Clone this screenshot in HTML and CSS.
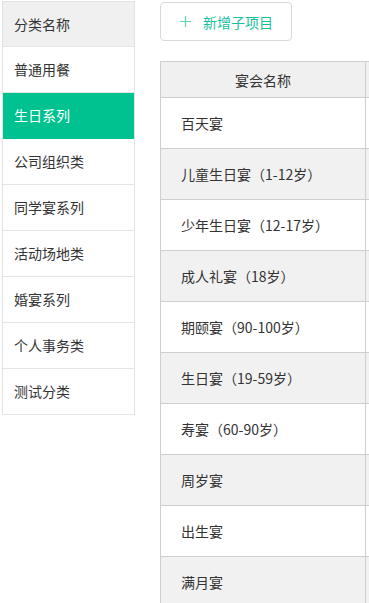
FILE: index.html
```html
<!DOCTYPE html>
<html lang="zh">
<head>
<meta charset="utf-8">
<link rel="stylesheet" href="styles.css">
</head>
<body>
<div class="page">
  <ul class="side">
    <li class="side-head">分类名称</li>
    <li class="side-item">普通用餐</li>
    <li class="side-item active">生日系列</li>
    <li class="side-item">公司组织类</li>
    <li class="side-item">同学宴系列</li>
    <li class="side-item">活动场地类</li>
    <li class="side-item">婚宴系列</li>
    <li class="side-item">个人事务类</li>
    <li class="side-item">测试分类</li>
  </ul>
  <div class="main">
    <button class="add-btn" type="button">
      <svg class="plus" width="11" height="11" viewBox="0 0 11 11"><path d="M5.5 0V11M0 5.5H11" stroke="#5fd3b5" stroke-width="1.2" fill="none"/></svg>
      <span>新增子项目</span>
    </button>
    <table class="grid">
      <thead>
        <tr><th class="c-name">宴会名称</th><th class="c-more"></th></tr>
      </thead>
      <tbody>
        <tr><td>百天宴</td><td></td></tr>
        <tr class="alt"><td>儿童生日宴（1-12岁）</td><td></td></tr>
        <tr><td>少年生日宴（12-17岁）</td><td></td></tr>
        <tr class="alt"><td>成人礼宴（18岁）</td><td></td></tr>
        <tr><td>期颐宴（90-100岁）</td><td></td></tr>
        <tr class="alt"><td>生日宴（19-59岁）</td><td></td></tr>
        <tr><td>寿宴（60-90岁）</td><td></td></tr>
        <tr class="alt"><td>周岁宴</td><td></td></tr>
        <tr><td>出生宴</td><td></td></tr>
        <tr class="alt"><td>满月宴</td><td></td></tr>
      </tbody>
    </table>
  </div>
</div>
</body>
</html>
```

FILE: styles.css
```css
html, body {
  margin: 0;
  padding: 0;
  overflow: hidden;
  background: #fff;
}
body {
  font-family: "Noto Sans CJK SC", "Noto Sans", sans-serif;
  font-size: 14px;
  color: #333;
}
.page {
  display: flex;
  align-items: flex-start;
  gap: 25px;
  padding: 1px 0 0 2px;
  width: 700px;
}
.side {
  list-style: none;
  margin: 0;
  padding: 0;
  width: 131px;
  border: 1px solid #e2e2e2;
  border-bottom: none;
  flex: none;
}
.side li {
  height: 45px;
  line-height: 45px;
  padding-left: 11px;
  border-bottom: 1px solid #e6e6e6;
}
.side li.side-head {
  height: 44px;
  line-height: 44px;
  background: #f0f0f0;
}
.side-item.active {
  background: #00c290;
  color: #fff;
  border-bottom-color: #00c290;
}
.main {
  display: flex;
  flex-direction: column;
  align-items: flex-start;
  padding-top: 1px;
}
.add-btn {
  display: flex;
  align-items: center;
  gap: 12px;
  width: 132px;
  height: 39px;
  padding: 0 0 0 19px;
  border: 1px solid #d6d9de;
  border-radius: 4px;
  background: #fff;
  font-family: inherit;
  font-size: 14px;
  color: #16c29b;
  cursor: pointer;
}
.plus { flex: none; }
.grid {
  margin-top: 20px;
  border-collapse: collapse;
  table-layout: fixed;
  width: 500px;
}
.grid th, .grid td {
  border: 1px solid #cfcfcf;
  padding: 0;
}
.grid th {
  height: 35px;
  font-weight: normal;
  background: #f0f0f0;
  text-align: center;
}
.grid th.c-name { width: 204px; }
.grid td {
  height: 50px;
  padding-left: 20px;
  text-align: left;
}
.grid tr.alt td {
  background: #f1f1f1;
}
```
